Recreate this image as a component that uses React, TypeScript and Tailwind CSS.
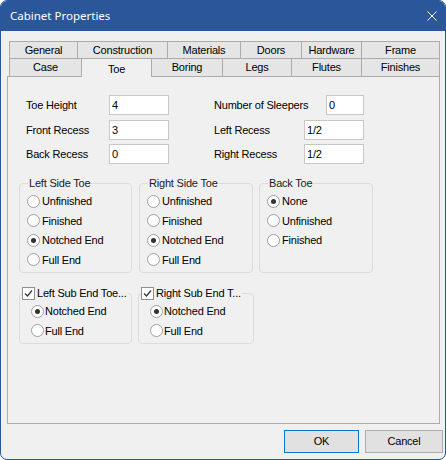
import React from 'react'

const row1 = [
  { label: 'General', w: 'w-[68px]' },
  { label: 'Construction', w: 'w-[90px]' },
  { label: 'Materials', w: 'w-[73px]' },
  { label: 'Doors', w: 'w-[61px]' },
  { label: 'Hardware', w: 'w-[60px]' },
  { label: 'Frame', w: 'w-[79px]' },
]

const row2 = [
  { label: 'Case', w: 'w-[72px]' },
  { label: 'Toe', w: 'w-[70px]' },
  { label: 'Boring', w: 'w-[71px]' },
  { label: 'Legs', w: 'w-[69px]' },
  { label: 'Flutes', w: 'w-[70px]' },
  { label: 'Finishes', w: 'w-[79px]' },
]

function Tab({ label, w, last, active, tall }: { label: string; w: string; last?: boolean; active?: boolean; tall?: boolean }) {
  if (active) {
    return (
      <div className={`${w} relative z-10 h-[19px] border-t border-l border-[#acacac] bg-[#f0f0f0] flex items-center justify-center pt-[3px]`}>
        {label}
      </div>
    )
  }
  return (
    <div
      className={`${w} ${tall ? 'h-[18px]' : 'h-[17px]'} border-t border-l ${last ? 'border-r' : ''} border-[#acacac] bg-[#e5e5e5] flex items-center justify-center`}
    >
      {label}
    </div>
  )
}

function Radio({ label, checked, gap = 'ml-[2px]' }: { label: string; checked?: boolean; gap?: string }) {
  return (
    <div className="flex items-center h-[19.5px]">
      <span className="w-[13px] h-[13px] rounded-full border border-[#a0a0a0] bg-white flex items-center justify-center shrink-0">
        {checked && <span className="w-[5px] h-[5px] rounded-full bg-[#333333]" />}
      </span>
      <span className={gap}>{label}</span>
    </div>
  )
}

function Field({ value, w }: { value: string; w: string }) {
  return (
    <div className={`${w} h-[20px] border border-[#c8c8c8] bg-white flex items-center pl-[2px]`}>{value}</div>
  )
}

function Group({ title, w, options, selected }: { title: string; w: string; options: string[]; selected: string }) {
  return (
    <fieldset className={`${w} border border-[#dcdcdc] rounded-[4px] px-[7px] pb-[4px]`}>
      <legend className="ml-[1px] px-[1px] leading-[14px] text-[#1a1a1a] whitespace-nowrap">{title}</legend>
      <div className="h-[78px] pt-[1.5px]">
        {options.map((o) => (
          <Radio key={o} label={o} checked={o === selected} />
        ))}
      </div>
    </fieldset>
  )
}

function CheckGroup({ title, w }: { title: string; w: string }) {
  return (
    <fieldset className={`${w} border border-[#dcdcdc] rounded-[4px] pb-[2px]`}>
      <legend className="ml-[2px] pr-[1px] leading-[14px] whitespace-nowrap">
        <span className="inline-flex items-center">
          <span className="w-[13px] h-[13px] border border-[#8f8f8f] bg-white flex items-center justify-center">
            <svg width="9" height="9" viewBox="0 0 9 9">
              <path d="M1 4.5 L3.5 7 L8 1.5" fill="none" stroke="#333" strokeWidth="1.2" />
            </svg>
          </span>
          <span className="ml-[2px]">{title}</span>
        </span>
      </legend>
      <div className="pl-[11px] pt-[1px]">
        <Radio label="Notched End" checked gap="ml-[1px]" />
        <Radio label="Full End" gap="ml-[1px]" />
      </div>
    </fieldset>
  )
}

export default function App() {
  return (
    <div className="w-[446px] h-[460px] bg-white font-['Liberation_Sans',Arial,sans-serif] text-[11px] tracking-[-0.2px] text-black">
      <div className="w-full h-full flex flex-col rounded-[7px] border border-[#2b579a] bg-[#f0f0f0] overflow-hidden">
        {/* title bar */}
        <div className="h-[30px] shrink-0 bg-[#2b579a] flex items-center justify-between pl-[9px] pr-[8px]">
          <span className="font-['Noto_Sans',sans-serif] text-[11.5px] tracking-normal text-white">Cabinet Properties</span>
          <svg width="10" height="10" viewBox="0 0 10 10">
            <path d="M0.5 0.5 L9.5 9.5 M9.5 0.5 L0.5 9.5" stroke="white" strokeWidth="1" />
          </svg>
        </div>

        <div className="pt-[10px]">
          <div className="ml-[8px]">
            <div className="flex">
              {row1.map((t, i) => (
                <Tab key={t.label} label={t.label} w={t.w} last={i === row1.length - 1} />
              ))}
            </div>
            <div className="flex items-start h-[18px]">
              {row2.map((t, i) => (
                <Tab key={t.label} label={t.label} w={t.w} tall last={i === row2.length - 1} active={t.label === 'Toe'} />
              ))}
            </div>
          </div>

          {/* tab page */}
          <div className="ml-[6px] w-[433px] h-[348px] border border-[#acacac] bg-[#f0f0f0]">
            <div className="flex pl-[18px] pt-[18px]">
              <div className="w-[188px]">
                <div className="flex items-center h-[20px]">
                  <span className="w-[83px]">Toe Height</span>
                  <Field value="4" w="w-[60px]" />
                </div>
                <div className="flex items-center h-[20px] mt-[5px]">
                  <span className="w-[83px]">Front Recess</span>
                  <Field value="3" w="w-[60px]" />
                </div>
                <div className="flex items-center h-[20px] mt-[4px]">
                  <span className="w-[83px]">Back Recess</span>
                  <Field value="0" w="w-[60px]" />
                </div>
              </div>
              <div className="w-[150px]">
                <div className="flex items-center justify-between h-[20px]">
                  <span>Number of Sleepers</span>
                  <Field value="0" w="w-[38px]" />
                </div>
                <div className="flex items-center justify-between h-[20px] mt-[5px]">
                  <span>Left Recess</span>
                  <Field value="1/2" w="w-[60px]" />
                </div>
                <div className="flex items-center justify-between h-[20px] mt-[4px]">
                  <span>Right Recess</span>
                  <Field value="1/2" w="w-[60px]" />
                </div>
              </div>
            </div>

            <div className="flex items-start pl-[11px] mt-[12px]">
              <Group
                title="Left Side Toe"
                w="w-[113px]"
                options={['Unfinished', 'Finished', 'Notched End', 'Full End']}
                selected="Notched End"
              />
              <div className="ml-[7px]">
                <Group
                  title="Right Side Toe"
                  w="w-[114px]"
                  options={['Unfinished', 'Finished', 'Notched End', 'Full End']}
                  selected="Notched End"
                />
              </div>
              <div className="ml-[6px]">
                <Group title="Back Toe" w="w-[114px]" options={['None', 'Unfinished', 'Finished']} selected="None" />
              </div>
            </div>

            <div className="flex items-start pl-[11px] mt-[13px]">
              <CheckGroup title="Left Sub End Toe..." w="w-[113px]" />
              <div className="ml-[6px]">
                <CheckGroup title="Right Sub End T..." w="w-[116px]" />
              </div>
            </div>
          </div>

          {/* buttons */}
          <div className="flex pl-[283px] mt-[6px] gap-[6px]">
            <button className="w-[75px] h-[23px] border border-[#0078d7] bg-[#e1e1e1]">OK</button>
            <button className="w-[78px] h-[23px] border border-[#adadad] bg-[#e1e1e1]">Cancel</button>
          </div>
        </div>
      </div>
    </div>
  )
}
